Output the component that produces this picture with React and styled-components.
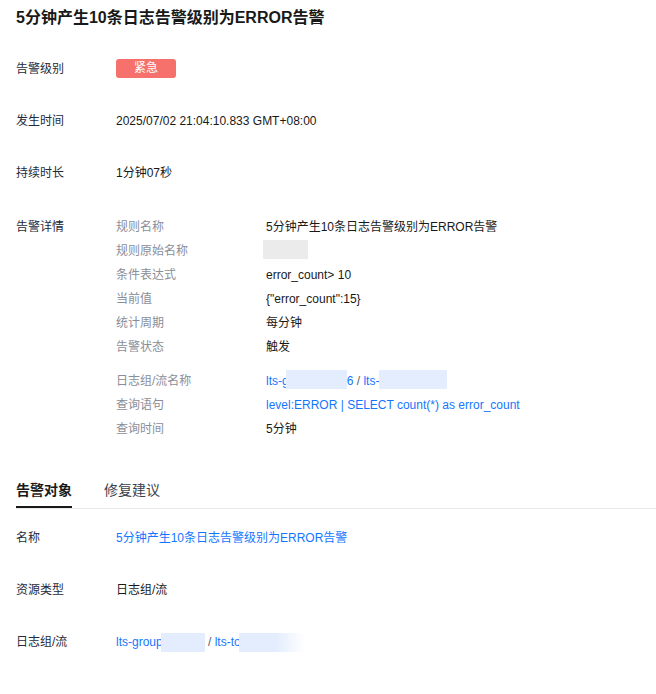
import styled, { createGlobalStyle } from "styled-components";

const GlobalStyle = createGlobalStyle`
  body {
    margin: 0;
    background: #ffffff;
    font-family: "Liberation Sans", Arial, "Noto Sans CJK SC", sans-serif;
    font-size: 12px;
    color: #252b3a;
  }
`;

const Page = styled.div`
  padding: 6px 16px 0;
  width: 640px;
`;

const Title = styled.h2`
  margin: 0 0 29px;
  font-size: 16px;
  line-height: 24px;
  font-weight: 700;
  color: #191919;
`;

const InfoList = styled.div`
  display: flex;
  flex-direction: column;
  gap: 32px;
  margin-top: ${(p) => p.$top || 0}px;
`;

const Row = styled.div`
  display: grid;
  grid-template-columns: 100px 1fr;
  line-height: ${(p) => p.$lh || 20}px;
`;

const Label = styled.div`
  color: #252b3a;
`;

const Value = styled.div`
  color: #191919;
  white-space: nowrap;
`;

const Badge = styled.span`
  display: inline-block;
  width: 60px;
  height: 19px;
  line-height: 19px;
  border-radius: 3px;
  background: #f6716b;
  color: #ffffff;
  text-align: center;
  vertical-align: top;
`;

const DetailTable = styled.div`
  display: flex;
  flex-direction: column;
  gap: 10px;
`;

const DetailGroup = styled.div`
  display: flex;
  flex-direction: column;
`;

const DetailRow = styled.div`
  display: grid;
  grid-template-columns: 150px 1fr;
  line-height: 24px;
`;

const SubLabel = styled.div`
  color: #8a8e99;
`;

const Link = styled.span`
  color: #1476ff;
`;

const Sep = styled.span`
  color: #575d6c;
`;

const Mask = styled.span`
  display: inline-block;
  vertical-align: top;
  margin-top: 1px;
  height: 19px;
  width: ${(p) => p.$w}px;
  margin-left: ${(p) => p.$ml || 0}px;
  background: ${(p) =>
    p.$fade
      ? `linear-gradient(90deg, ${p.$tone} 55%, rgba(255,255,255,0))`
      : p.$tone};
  filter: blur(0.6px);
`;

const Tabs = styled.div`
  display: flex;
  gap: 32px;
  margin: 30px -16px 0 0;
  border-bottom: 1px solid #e8e9ec;
`;

const Tab = styled.div`
  font-size: 14px;
  line-height: 20px;
  padding: 9px 0 6px;
  border-bottom: 2px solid ${(p) => (p.$active ? "#191919" : "transparent")};
  color: ${(p) => (p.$active ? "#191919" : "#3a3f4b")};
  font-weight: ${(p) => (p.$active ? 600 : 400)};
`;

const BLUE_MASK = "#e3edfd";
const GRAY_MASK = "#ebebeb";

export default function App() {
  return (
    <>
      <GlobalStyle />
      <Page>
        <Title>5分钟产生10条日志告警级别为ERROR告警</Title>
        <InfoList>
          <Row>
            <Label>告警级别</Label>
            <Value>
              <Badge>紧急</Badge>
            </Value>
          </Row>
          <Row>
            <Label>发生时间</Label>
            <Value>2025/07/02 21:04:10.833 GMT+08:00</Value>
          </Row>
          <Row>
            <Label>持续时长</Label>
            <Value>1分钟07秒</Value>
          </Row>
          <Row $lh={24}>
            <Label>告警详情</Label>
            <DetailTable>
              <DetailGroup>
                <DetailRow>
                  <SubLabel>规则名称</SubLabel>
                  <Value>5分钟产生10条日志告警级别为ERROR告警</Value>
                </DetailRow>
                <DetailRow>
                  <SubLabel>规则原始名称</SubLabel>
                  <Value>
                    <Mask $w={45} $ml={-3} $tone={GRAY_MASK} />
                  </Value>
                </DetailRow>
                <DetailRow>
                  <SubLabel>条件表达式</SubLabel>
                  <Value>error_count&gt; 10</Value>
                </DetailRow>
                <DetailRow>
                  <SubLabel>当前值</SubLabel>
                  <Value>{'{"error_count":15}'}</Value>
                </DetailRow>
                <DetailRow>
                  <SubLabel>统计周期</SubLabel>
                  <Value>每分钟</Value>
                </DetailRow>
                <DetailRow>
                  <SubLabel>告警状态</SubLabel>
                  <Value>触发</Value>
                </DetailRow>
              </DetailGroup>
              <DetailGroup>
                <DetailRow>
                  <SubLabel>日志组/流名称</SubLabel>
                  <Value>
                    <Link>
                      lts-g
                      <Mask $w={61} $ml={-3} $tone={BLUE_MASK} />6
                    </Link>
                    <Sep> / </Sep>
                    <Link>
                      lts-
                      <Mask $w={68} $tone={BLUE_MASK} />
                    </Link>
                  </Value>
                </DetailRow>
                <DetailRow>
                  <SubLabel>查询语句</SubLabel>
                  <Value>
                    <Link>level:ERROR | SELECT count(*) as error_count</Link>
                  </Value>
                </DetailRow>
                <DetailRow>
                  <SubLabel>查询时间</SubLabel>
                  <Value>5分钟</Value>
                </DetailRow>
              </DetailGroup>
            </DetailTable>
          </Row>
        </InfoList>

        <Tabs>
          <Tab $active>告警对象</Tab>
          <Tab>修复建议</Tab>
        </Tabs>

        <InfoList $top={19}>
          <Row>
            <Label>名称</Label>
            <Value>
              <Link>5分钟产生10条日志告警级别为ERROR告警</Link>
            </Value>
          </Row>
          <Row>
            <Label>资源类型</Label>
            <Value>日志组/流</Value>
          </Row>
          <Row>
            <Label>日志组/流</Label>
            <Value>
              <Link>
                lts-group
                <Mask $w={44} $ml={-2} $tone={BLUE_MASK} />
              </Link>
              <Sep> / </Sep>
              <Link>
                lts-to
                <Mask $w={66} $ml={-2} $fade $tone={BLUE_MASK} />
              </Link>
            </Value>
          </Row>
        </InfoList>
      </Page>
    </>
  );
}
